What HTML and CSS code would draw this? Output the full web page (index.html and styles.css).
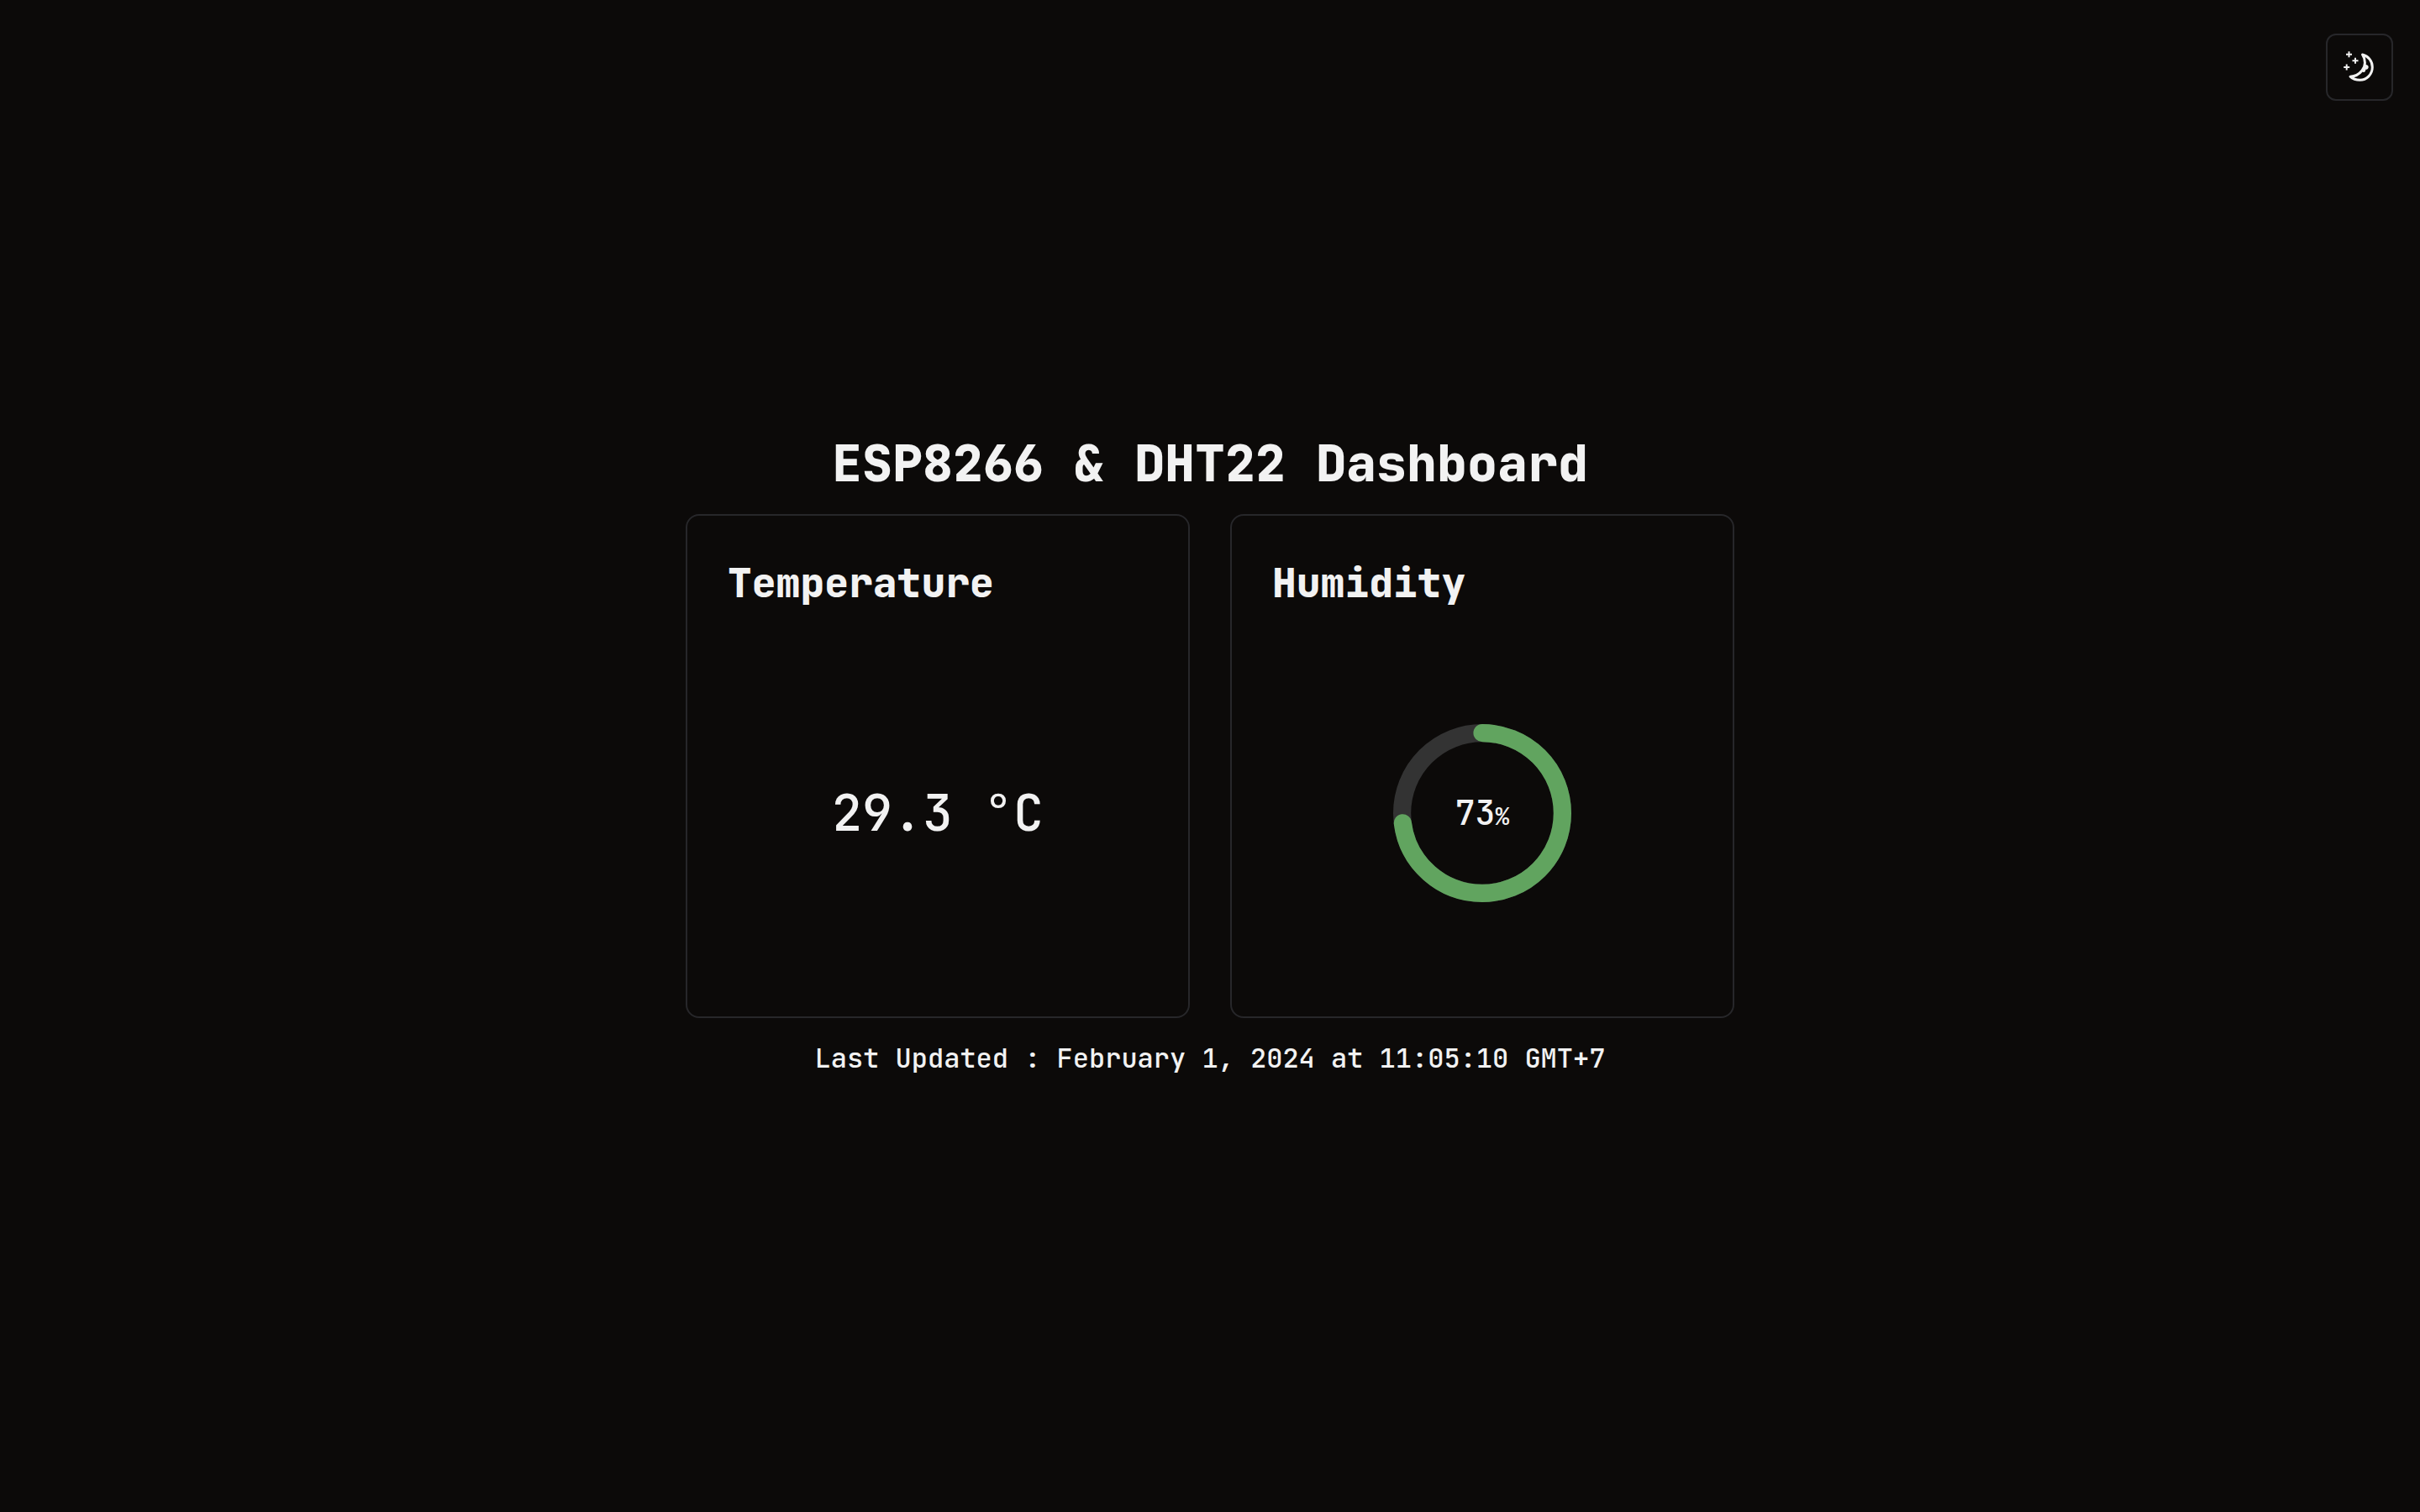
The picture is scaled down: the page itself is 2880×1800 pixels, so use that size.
FILE: index.html
```html
<!DOCTYPE html>
<html lang="en">
<head>
<meta charset="utf-8">
<meta name="viewport" content="width=device-width, initial-scale=1">
<title>ESP8266 &amp; DHT22 Dashboard</title>
<link rel="stylesheet" href="styles.css">
</head>
<body class="page">
  <button class="theme-toggle" type="button" aria-label="Toggle theme">
    <svg class="theme-icon" viewBox="0 0 48 48" aria-hidden="true">
      <path class="moon-line" d="M27.500 9C35 11 39.300 17 39.300 24C39.300 32.500 32.500 39.300 24.500 39.300C20 39.300 16 38 13 35.200C18.500 35 23.500 32.500 27 28C31.500 22.500 31.500 15 27.500 9Z"/>
      <path class="moon-fill" d="M30.500 21C33 20.500 35 22 34.700 24C34.500 26 33 26.800 31.300 26.800C31.500 29 30 30.500 28.500 30L26.500 28.500Z"/>
      <path class="star-line" d="M11.500 5.200V12.200M8 8.700H15M19 12.800V19.800M15.500 16.300H22.500M8.700 20.500V27.500M5.200 24H12.200"/>
    </svg>
  </button>
  <main class="dashboard">
    <h1 class="title">ESP8266 &amp; DHT22 Dashboard</h1>
    <div class="cards">
      <section class="card">
        <h2 class="card-title">Temperature</h2>
        <div class="card-body"><p class="reading">29.3 °C</p></div>
      </section>
      <section class="card">
        <h2 class="card-title">Humidity</h2>
        <div class="card-body">
          <div class="gauge">
            <svg class="gauge-ring" viewBox="0 0 100 100" aria-hidden="true">
              <circle class="gauge-track" cx="50" cy="50" r="45"/>
              <circle class="gauge-value" cx="50" cy="50" r="45" pathLength="100" stroke-dasharray="73 100"/>
            </svg>
            <p class="gauge-label">73<span class="gauge-unit">%</span></p>
          </div>
        </div>
      </section>
    </div>
    <p class="updated">Last Updated : February 1, 2024 at 11:05:10 GMT+7</p>
  </main>
</body>
</html>
```
FILE: styles.css
```css
*, *::before, *::after { box-sizing: border-box; }

.page {
  margin: 0;
  min-height: 100vh;
  display: flex;
  align-items: center;
  justify-content: center;
  background: #0c0a09;
  color: #f2f2f2;
  font-family: "JetBrains Mono", "DejaVu Sans Mono", monospace;
  font-weight: 500;
}

.theme-toggle {
  position: absolute;
  top: 40px;
  right: 32px;
  width: 80px;
  height: 80px;
  padding: 0;
  display: flex;
  align-items: center;
  justify-content: center;
  border: 2px solid #27272a;
  border-radius: 12px;
  background: transparent;
  color: inherit;
  cursor: pointer;
}

.theme-icon { width: 48px; height: 48px; fill: none; stroke: currentColor; }
.moon-line { stroke-width: 3; stroke-linejoin: round; }
.moon-fill { fill: currentColor; stroke: none; }
.star-line { stroke-width: 2; }

.dashboard {
  display: flex;
  flex-direction: column;
  align-items: center;
  gap: 24px;
  width: 100%;
}

.title, .card-title, .reading, .gauge-label, .updated { margin: 0; }
.title { font-size: 60px; line-height: 72px; font-weight: 800; }

.cards {
  display: grid;
  grid-template-columns: repeat(2, 1fr);
  gap: 48px;
  width: 100%;
  max-width: 1248px;
}

.card {
  display: flex;
  flex-direction: column;
  gap: 48px;
  aspect-ratio: 1;
  padding: 48px;
  border: 2px solid #27272a;
  border-radius: 16px;
}

.card-title { font-size: 48px; line-height: 64px; font-weight: 800; }
.card-body { flex: 1; display: grid; place-items: center; }
.reading { font-size: 60px; line-height: 72px; }

.gauge { display: grid; place-items: center; }
.gauge > * { grid-area: 1 / 1; }
.gauge-ring {
  width: 212px;
  height: 212px;
  fill: none;
  stroke-width: 10;
  transform: rotate(-90deg);
}
.gauge-track { stroke: #333333; }
.gauge-value { stroke: #61a45f; stroke-linecap: round; }
.gauge-label { font-size: 40px; line-height: 48px; }
.gauge-unit { font-size: 28px; line-height: 28px; }

.updated { font-size: 32px; line-height: 48px; }
```
